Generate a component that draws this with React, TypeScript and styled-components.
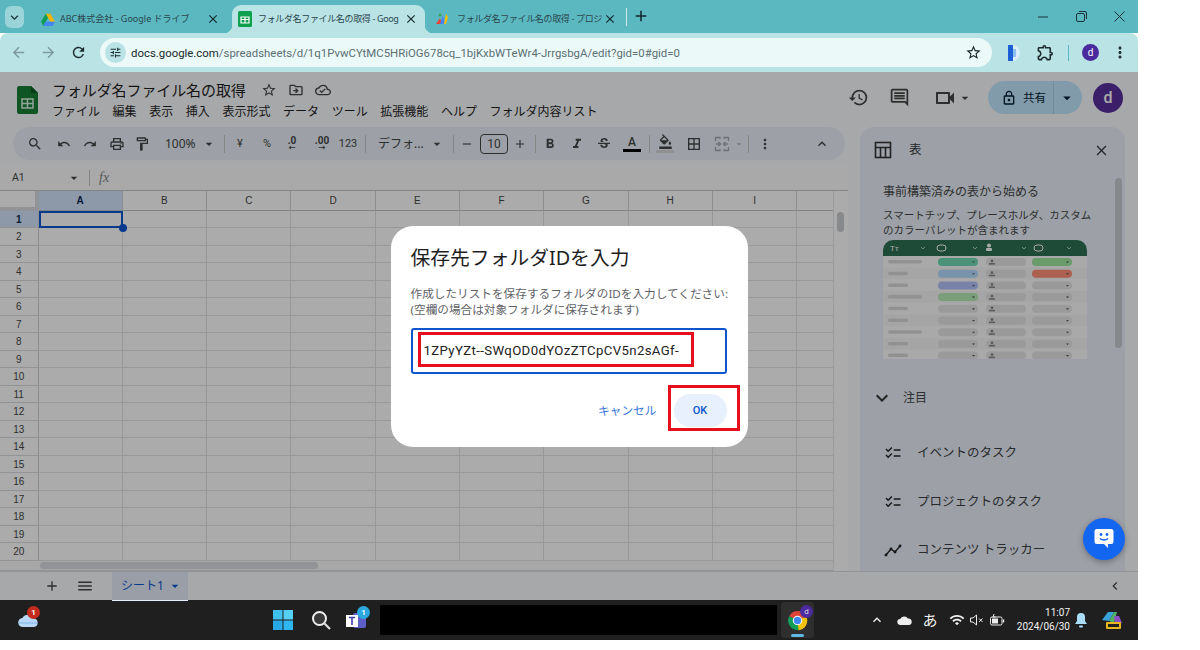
import React from "react";
import styled, { createGlobalStyle } from "styled-components";
import {
  MdSearch, MdUndo, MdRedo, MdOutlinePrint, MdOutlineFormatPaint, MdArrowDropDown, MdRemove, MdAdd,
  MdFormatBold, MdFormatItalic, MdStrikethroughS, MdOutlineFormatColorFill, MdBorderAll, MdMoreVert,
  MdKeyboardArrowUp, MdStarBorder, MdOutlineDriveFileMove, MdOutlineCloudDone, MdHistory,
  MdOutlineComment, MdOutlineVideocam, MdLockOutline, MdClose, MdMenu, MdChecklist,
  MdExpandMore, MdArrowBack, MdArrowForward, MdRefresh, MdTune, MdChevronLeft, MdKeyboardArrowDown,
  MdOutlineExtension, MdWifi,
} from "react-icons/md";

const SANS = `"Noto Sans", "Noto Sans CJK JP", sans-serif`;
const UI = `Roboto, "Noto Sans CJK JP", sans-serif`;

const Global = createGlobalStyle`
  html, body { margin: 0; padding: 0; background: #fff; }
  body { font-family: ${SANS}; width: 1200px; height: 650px; overflow: hidden; }
  * { box-sizing: border-box; }
`;

const Screen = styled.div`
  width: 1138px; height: 640px; display: flex; flex-direction: column; overflow: hidden;
`;

/* ---------- browser chrome ---------- */
const TabStrip = styled.div`
  height: 33px; flex: none; background: #5bb8c1; display: flex; align-items: flex-end; color: #1b3338;
`;
const TabListButton = styled.div`
  width: 19px; height: 22px; margin: 0 8px 5px 5px; border-radius: 6px; background: #9ad3d8;
  display: flex; align-items: center; justify-content: center; font-size: 15px;
`;
const Tab = styled.div<{ $w: number; $active?: boolean; $pl: number; $gap: number; $pr: number; $ml?: number }>`
  position: relative; width: ${(p) => p.$w}px; height: ${(p) => (p.$active ? 28 : 26)}px;
  margin-left: ${(p) => p.$ml ?? 0}px;
  padding: 0 ${(p) => p.$pr}px ${(p) => (p.$active ? 0 : 2)}px ${(p) => p.$pl}px;
  display: flex; align-items: center; gap: ${(p) => p.$gap}px;
  background: ${(p) => (p.$active ? "#b9e3e5" : "transparent")}; border-radius: 9px 9px 0 0;
  ${(p) => p.$active && `
    &::before, &::after { content: ""; position: absolute; bottom: 0; width: 8px; height: 8px; }
    &::before { left: -8px; background: radial-gradient(circle at 0 0, transparent 8px, #b9e3e5 8.5px); }
    &::after { right: -8px; background: radial-gradient(circle at 100% 0, transparent 8px, #b9e3e5 8.5px); }
  `}
`;
const TabTitle = styled.span<{ $tight?: boolean }>`
  flex: 1; min-width: 0; white-space: nowrap; font: 9px/14px ${SANS}; color: #2a464c;
  letter-spacing: ${(p) => (p.$tight ? "-0.35px" : "0")};
`;
const TabClose = styled(MdClose)`
  flex: none; font-size: 14px; color: #16282c;
`;
const TabDivider = styled.div`
  width: 1px; height: 18px; background: #cfeaec; margin: 0 0 7px 5px;
`;
const NewTab = styled(MdAdd)`
  font-size: 18px; margin: 0 0 8px 5px; color: #10262a;
`;
const WindowButtons = styled.div`
  margin-left: auto; display: flex; height: 33px; align-items: center; color: #1b3338;
`;
const WindowButton = styled.div`
  width: 38px; display: flex; justify-content: center; align-items: center;
`;
const ChromeBar = styled.div`
  height: 39px; flex: none; background: #b9e3e5; display: flex; align-items: center;
  border-radius: 8px 8px 0 0; padding-left: 3px; position: relative;
`;
const NavButton = styled.div<{ $muted?: boolean }>`
  width: 30px; display: flex; justify-content: center; font-size: 17px;
  color: ${(p) => (p.$muted ? "#7d9a9e" : "#1d2c2e")};
`;
const AddressBar = styled.div`
  width: 892px; height: 29px; margin-left: 7px; border-radius: 15px; background: #ecf9f9;
  display: flex; align-items: center; padding: 0 10px 0 5px;
`;
const SiteInfo = styled.div`
  width: 21px; height: 21px; border-radius: 50%; background: #b9e3e5; display: flex;
  align-items: center; justify-content: center; font-size: 13px; color: #1c2d30;
`;
const Url = styled.div`
  margin-left: 5px; font: 11.4px/16px ${UI}; color: #5b6f72; white-space: nowrap;
  b { font-weight: 400; color: #17282b; }
`;
const BarStar = styled(MdStarBorder)`
  margin-left: auto; font-size: 17px; color: #1d2c2e;
`;
const BarIcon = styled.div<{ $ml: number; $w: number }>`
  margin-left: ${(p) => p.$ml}px; width: ${(p) => p.$w}px; display: flex; justify-content: center;
  align-items: center; font-size: 19px; color: #1d2c2e;
`;
const BarDivider = styled.div`
  width: 1px; height: 16px; background: #5bb8c1; margin-left: 13px;
`;
const SmallAvatar = styled.div`
  margin-left: 13px; width: 17px; height: 17px; border-radius: 50%; background: #4b2a9f; color: #fff;
  font: 10px/17px ${UI}; text-align: center;
`;

/* ---------- sheets ---------- */
const SheetApp = styled.div`
  position: relative; height: 528px; flex: none; background: #f9fbfd; display: flex; flex-direction: column;
`;
const Dim = styled.div`
  position: absolute; inset: 0; background: rgba(0, 0, 0, 0.33); display: flex;
  align-items: center; justify-content: center; z-index: 10;
`;
const Header = styled.div`
  height: 55px; flex: none; display: flex; align-items: flex-start; padding: 0 15px 0 17px;
`;
const SheetsLogo = styled.svg`
  width: 21px; height: 28px; margin-top: 14px; flex: none;
`;
const TitleBlock = styled.div`
  margin-left: 14px; padding-top: 7px;
`;
const TitleRow = styled.div`
  display: flex; align-items: center; height: 22px;
`;
const DocTitle = styled.span`
  font: 15px/22px ${SANS}; color: #1f1f1f; letter-spacing: -0.1px;
`;
const TitleIcon = styled.span<{ $ml: number }>`
  display: flex; font-size: 16px; margin-left: ${(p) => p.$ml}px; color: #444746;
`;
const MenuRow = styled.div`
  display: flex; gap: 12.6px; height: 22px; align-items: center; font: 12px/22px ${SANS}; color: #1f1f1f;
`;
const HeaderRight = styled.div`
  margin-left: auto; margin-top: 9px; height: 33px; display: flex; align-items: center; color: #444746;
`;
const HeadIcon = styled.span<{ $ml: number; $size?: number }>`
  display: flex; margin-left: ${(p) => p.$ml}px; font-size: ${(p) => p.$size ?? 24}px;
`;
const ShareButton = styled.div`
  margin-left: 15px; width: 94px; height: 33px; border-radius: 17px; background: #c2e7ff;
  display: flex; align-items: center; color: #001d35;
`;
const ShareMain = styled.div`
  width: 66px; height: 33px; display: flex; align-items: center; padding-left: 13px; gap: 6px;
  border-right: 1px solid #a8cde8; font: 11.5px/16px ${SANS};
`;
const ShareCaret = styled(MdArrowDropDown)`
  font-size: 18px; margin-left: 4px;
`;
const Avatar = styled.div`
  margin-left: 11px; width: 30px; height: 30px; border-radius: 50%; background: #58309d; color: #fff;
  font: 500 16px/30px ${UI}; text-align: center;
`;
const Body = styled.div`
  flex: 1; min-height: 0; display: flex;
`;
const SheetColumn = styled.div`
  width: 848px; flex: none; display: flex; flex-direction: column; background: #fff;
`;
const ToolbarShell = styled.div`
  background: #f9fbfd; padding-bottom: 6px;
`;
const ToolBar = styled.div`
  height: 33px; background: #ebf0fa; border-radius: 17px; margin-left: 13px; width: 832px;
  display: flex; align-items: center; padding-left: 8px; color: #444746;
`;
const Tool = styled.div<{ $w: number; $ml?: number; $dim?: boolean; $size?: number }>`
  width: ${(p) => p.$w}px; margin-left: ${(p) => p.$ml ?? 0}px; flex: none; display: flex;
  justify-content: center; align-items: center; font-size: ${(p) => p.$size ?? 16}px; white-space: nowrap;
  color: ${(p) => (p.$dim ? "#a4a9ae" : "inherit")};
`;
const ToolText = styled(Tool)`
  font: 11px/16px ${UI};
`;
const ToolGroup = styled.div<{ $w: number; $pl: number }>`
  width: ${(p) => p.$w}px; flex: none; padding-left: ${(p) => p.$pl}px; display: flex; align-items: center;
  justify-content: space-between; font: 12px/16px ${SANS}; white-space: nowrap;
`;
const ToolSep = styled.div<{ $ml: number; $mr: number }>`
  width: 1px; height: 18px; flex: none; background: #c7c7c7;
  margin: 0 ${(p) => p.$mr}px 0 ${(p) => p.$ml}px;
`;
const DecimalMark = styled.span`
  display: flex; flex-direction: column; align-items: center; font: 700 10px/10px ${UI};
  i { font: 700 7px/5px ${UI}; }
`;
const SizeBox = styled.div`
  margin-left: 6px; width: 28px; height: 20px; border: 1px solid #444746; border-radius: 4px; flex: none;
  font: 12px/18px ${UI}; text-align: center;
`;
const ColorA = styled.div`
  display: flex; flex-direction: column; align-items: center; font: 500 12px/13px ${UI};
  &::after { content: ""; width: 18px; height: 3px; background: #000; }
`;
const FillIcon = styled.div`
  display: flex; flex-direction: column; align-items: center; font-size: 15px;
  &::after { content: ""; width: 18px; height: 3px; background: #d8d8d8; margin-top: 1px; }
`;
const FormulaBar = styled.div`
  height: 25px; flex: none; display: flex; align-items: center; padding-left: 12px;
  color: #444746; border-bottom: 1px solid #c4c7c5; background: #fdfdfd;
`;
const CellName = styled.span`
  font: 10.5px/14px ${UI}; width: 54px;
`;
const FormulaCaret = styled(MdArrowDropDown)`
  font-size: 16px;
`;
const FormulaDiv = styled.div`
  width: 1px; height: 16px; background: #c4c7c5; margin-left: 7px;
`;
const Fx = styled.i`
  font: italic 14px/16px "Liberation Serif", serif; margin-left: 9px; color: #80868b;
`;
const GridArea = styled.div`
  position: relative; flex: 1; min-height: 0; display: flex; flex-direction: column; overflow: hidden;
`;
const Grid = styled.div`
  display: grid; height: 369.5px; flex: none; overflow: hidden;
  grid-template-columns: 38.5px repeat(10, 84.3px);
  grid-template-rows: 19.5px repeat(20, 17.5px);
`;
const Corner = styled.div`
  background: #fff; border-right: 4px solid #dadce0; border-bottom: 4px solid #dadce0;
`;
const ColHead = styled.div<{ $on?: boolean }>`
  background: ${(p) => (p.$on ? "#d3e3fd" : "#fff")}; border-right: 1px solid #d0d3d6; border-bottom: 1px solid #c4c7c5;
  font: ${(p) => (p.$on ? 700 : 400)} 10px/19px "Liberation Sans", sans-serif; text-align: center;
  color: ${(p) => (p.$on ? "#0b2a52" : "#444746")};
`;
const RowHead = styled.div<{ $on?: boolean }>`
  background: ${(p) => (p.$on ? "#d3e3fd" : "#fff")}; border-right: 1px solid #d0d3d6; border-bottom: 1px solid #d9dcdf;
  font: ${(p) => (p.$on ? 700 : 400)} 10px/17px "Liberation Sans", sans-serif; text-align: center;
  color: ${(p) => (p.$on ? "#0b2a52" : "#444746")};
`;
const Cell = styled.div<{ $sel?: boolean }>`
  position: relative; border-right: 1px solid #e1e3e6; border-bottom: 1px solid #e1e3e6;
  ${(p) => p.$sel && `border: 2px solid #0b57d0; z-index: 1;`}
`;
const FillHandle = styled.span`
  position: absolute; right: -6px; bottom: -6px; width: 8px; height: 8px; border-radius: 50%; background: #0b57d0;
`;
const HTrack = styled.div`
  flex: 1; padding: 1px 0 0 40px; border-bottom: 1px solid #dadce0; background: #fafafa;
`;
const HThumb = styled.div`
  width: 278px; height: 7px; border-radius: 4px; background: #dadce0;
`;
const VThumb = styled.div`
  position: absolute; right: 4px; top: 21px; width: 7px; height: 20px; border-radius: 4px; background: #c9ccd0;
`;
const VGutter = styled.div`
  position: absolute; right: 0; top: 0; bottom: 0; width: 15px; background: #fff; border-left: 1px solid #e6e8ea;
`;

const SidePanel = styled.div`
  position: relative; width: 265px; margin-left: 12px; border-radius: 14px 14px 0 0; background: #ebf0fa;
  overflow: hidden; color: #444746;
`;
const SideHead = styled.div`
  height: 46px; display: flex; align-items: center; padding-left: 13px; color: #3c4043;
`;
const SideHeadIcon = styled.svg`
  width: 20px; height: 20px;
`;
const SideHeadTitle = styled.span`
  margin-left: 16px; font: 12.5px/16px ${SANS};
`;
const SideClose = styled(MdClose)`
  margin-left: auto; margin-right: 15px; font-size: 17px;
`;
const SideBody = styled.div`
  padding: 11px 0 0 23px;
`;
const SideHeading = styled.div`
  font: 12px/16px ${SANS}; color: #444746;
`;
const SideDesc = styled.div`
  margin-top: 8px; font: 10.5px/14.5px ${SANS}; color: #444746; white-space: nowrap;
`;
const Mock = styled.svg`
  display: block; margin-top: 3px; width: 204px; height: 119px;
`;
const SectionRow = styled.div`
  margin: 29px 0 0 -13px; height: 20px; display: flex; align-items: center; gap: 9px; font: 12px/16px ${SANS};
`;
const SectionChevron = styled(MdExpandMore)`
  font-size: 24px; color: #333;
`;
const TemplateList = styled.div`
  margin-top: 21px;
`;
const TemplateRow = styled.div`
  height: 48.5px; display: flex; align-items: center; gap: 15px; padding-left: 1px; font: 12.5px/16px ${SANS}; color: #3c4043;
  svg { font-size: 18px; color: #222; flex: none; }
`;
const PanelScroll = styled.div`
  position: absolute; right: 3px; top: 51px; width: 7px; height: 170px; border-radius: 4px; background: #c8cbd0;
`;
const Fab = styled.div`
  position: absolute; left: 1083px; top: 446px; width: 42px; height: 42px; border-radius: 50%; background: #1366f0;
  z-index: 20; display: flex; align-items: center; justify-content: center; box-shadow: 0 2px 6px rgba(0,0,0,.3);
`;
const BottomBar = styled.div`
  height: 29px; flex: none; display: flex; align-items: center; padding-left: 44px; color: #444746;
  background: #f9fbfd; border-top: 1px solid #dadce0;
`;
const BottomIcon = styled.span<{ $ml?: number }>`
  display: flex; margin-left: ${(p) => p.$ml ?? 0}px; font-size: 16px;
`;
const SheetTab = styled.div`
  margin-left: 18px; width: 76px; height: 29px; background: #e6edfa; color: #0b57d0; display: flex;
  align-items: center; padding-left: 9px; font: 12px/16px ${SANS};
`;
const SheetTabCaret = styled(MdArrowDropDown)`
  font-size: 16px; margin-left: 3px;
`;
const CollapseIcon = styled(MdChevronLeft)`
  margin: 0 15px 0 auto; font-size: 16px;
`;

/* ---------- dialog ---------- */
const Dialog = styled.div`
  width: 357px; height: 221px; border-radius: 22px; background: #fff; padding: 20px 21px 0 20px;
`;
const DialogTitle = styled.div`
  font: 19.8px/24px ${SANS}; color: #1f1f1f; white-space: nowrap;
`;
const DialogText = styled.div`
  margin-top: 16px; font: 11.65px/16px ${SANS}; color: #5f6368; white-space: nowrap;
`;
const DialogInput = styled.div`
  position: relative; margin-top: 10px; width: 316px; height: 46px; border: 2px solid #1155cc; border-radius: 3px;
  padding-left: 11px; font: 13.2px/42px Roboto, sans-serif; letter-spacing: 0.37px; color: #222; white-space: nowrap;
`;
const RedFrame = styled.div<{ $l: number; $t: number; $w: number; $h: number }>`
  position: absolute; left: ${(p) => p.$l}px; top: ${(p) => p.$t}px; width: ${(p) => p.$w}px; height: ${(p) => p.$h}px;
  border: 3px solid #e60f1e;
`;
const DialogActions = styled.div`
  margin-top: 20px; display: flex; justify-content: flex-end; align-items: center; gap: 17px;
`;
const CancelLink = styled.span`
  font: 11.7px/16px ${SANS}; color: #3b78d8;
`;
const OkButton = styled.div`
  position: relative; width: 53px; height: 33px; border-radius: 17px; background: #e8f0fe; color: #0b57d0;
  font: 500 11px/33px ${UI}; text-align: center;
`;

/* ---------- taskbar ---------- */
const Taskbar = styled.div`
  height: 40px; flex: none; background: #1f1f1f; display: flex; align-items: center; padding-left: 16px; color: #f2f2f2;
`;
const TaskSlot = styled.div<{ $ml?: number; $w: number }>`
  position: relative; width: ${(p) => p.$w}px; margin-left: ${(p) => p.$ml ?? 0}px; flex: none;
  display: flex; align-items: center; justify-content: center; font-size: 16px;
`;
const CountBadge = styled.span<{ $bg: string; $r: number; $t: number }>`
  position: absolute; right: ${(p) => p.$r}px; top: ${(p) => p.$t}px; width: 13px; height: 13px; border-radius: 50%;
  background: ${(p) => p.$bg}; color: #fff; font: 700 8px/13px ${UI}; text-align: center;
`;
const Blackout = styled.div`
  width: 397px; height: 30px; margin-left: 13px; background: #000; flex: none;
`;
const ChromeTile = styled.div`
  position: relative; width: 33px; height: 36px; margin-left: 4px; background: #2e2e2e; border-radius: 4px; flex: none;
  display: flex; align-items: center; justify-content: center;
  &::after { content: ""; position: absolute; bottom: 1px; left: 10px; width: 13px; height: 3px; border-radius: 2px; background: #5fb8e6; }
`;
const ProfileDot = styled.span`
  position: absolute; right: 1px; top: 3px; width: 13px; height: 13px; border-radius: 50%; background: #4b2a9f; color: #ddd;
  font: 8px/13px ${UI}; text-align: center;
`;
const Ime = styled(TaskSlot)`
  font: 15px/18px "Noto Sans CJK JP", sans-serif;
`;
const Clock = styled.div`
  margin-left: 5px; width: 60px; flex: none; text-align: right; font: 10px/14px ${UI}; color: #f2f2f2; white-space: nowrap;
`;

/* ---------- drawings ---------- */
const DriveIcon = () => (
  <svg width="14" height="13" viewBox="0 0 24 22" style={{ flex: "none" }}>
    <path d="M8 1h8l8 14h-8z" fill="#f4b400" />
    <path d="M8 1 0 15l4 7 8-14z" fill="#0f9d58" />
    <path d="M4 22h16l4-7H8z" fill="#4285f4" />
  </svg>
);
const SheetFavicon = () => (
  <svg width="14" height="16" viewBox="0 0 14 16" style={{ flex: "none" }}>
    <rect width="14" height="16" rx="1.5" fill="#0e9f4f" />
    <path d="M3 6h8v6H3zM3 8.5h8M7 6v6" stroke="#fff" strokeWidth="1.2" fill="none" />
  </svg>
);
const ProjectIcon = () => (
  <svg width="14" height="14" viewBox="0 0 14 14" style={{ flex: "none" }}>
    <path d="M1 12 5 6l2 6z" fill="#ea4335" />
    <path d="M5 12 8 3l2 9z" fill="#4285f4" />
    <path d="M9 12l2-10 2 3-2 7z" fill="#fbbc04" />
    <circle cx="5" cy="3" r="1.6" fill="#34a853" />
  </svg>
);
const MergeIcon = () => (
  <svg width="16" height="16" viewBox="0 0 16 16" fill="none" stroke="currentColor" strokeWidth="1.3">
    <path d="M6 3V1.5H1.5V5M10 3V1.5h4.5V5M6 13v1.5H1.5V11M10 13v1.5h4.5V11" />
    <path d="M2 8h4M4.5 6 6.5 8l-2 2M14 8h-4M11.5 6 9.5 8l2 2" />
  </svg>
);
const TrackerIcon = () => (
  <svg width="18" height="18" viewBox="0 0 18 18" fill="#222" stroke="#222" strokeWidth="1.3">
    <path d="M2 14l5-6 4 3 5-6" fill="none" />
    <circle cx="2" cy="14" r=".8" /><circle cx="7" cy="8" r=".8" />
    <circle cx="11" cy="11" r=".8" /><circle cx="16" cy="5" r=".8" />
  </svg>
);
const MockTable = () => {
  const col1 = ["#6fdcb4", "#b4dcff", "#b4c4fa", "#b6ecb6"];
  const col3 = ["#9fe89f", "#ff9078"];
  const rows = Array.from({ length: 9 }, (_, i) => i);
  return (
    <Mock viewBox="0 0 204 119">
      <path d="M0 119V10a10 10 0 0 1 10-10h184a10 10 0 0 1 10 10v109z" fill="#fff" />
      <path d="M0 16V10a10 10 0 0 1 10-10h184a10 10 0 0 1 10 10v6z" fill="#2c7053" />
      <text x="7" y="11" fontSize="8" fill="#fff" fontFamily="Liberation Sans">Tт</text>
      {[53, 150].map((x) => <rect key={x} x={x + 1} y="5" width="9" height="6" rx="3" fill="none" stroke="#fff" strokeWidth="1" />)}
      <circle cx="106" cy="5.5" r="2" fill="#fff" />
      <rect x="103" y="8" width="6" height="3" rx="1" fill="#fff" />
      {[38, 90, 139, 184].map((x) => <path key={x} d={`M${x} 7l2 2 2-2`} stroke="#d5e8de" fill="none" strokeWidth=".8" />)}
      {rows.map((i) => {
        const y = 16 + i * 11.7;
        return (
          <g key={i}>
            <rect y={y} width="204" height="11.7" fill={i % 2 ? "#f6f6f6" : "#fdfdfd"} />
            <rect x="5" y={y + 4} width={i % 3 === 0 ? 34 : 20} height="3.5" rx="1.7" fill="#d9d9d9" />
            <rect x="55" y={y + 2} width="40" height="8" rx="4" fill={col1[i] ?? "#e6e6e6"} />
            <rect x="103" y={y + 2} width="40" height="8" rx="4" fill="#e6e6e6" />
            <circle cx="109" cy={y + 5} r="1.4" fill="#888" />
            <rect x="106" y={y + 7} width="6" height="1.6" fill="#888" />
            <rect x="149" y={y + 2} width="40" height="8" rx="4" fill={col3[i] ?? "#e6e6e6"} />
            <path d={`M89 ${y + 5.5}h3l-1.5 1.6zM183 ${y + 5.5}h3l-1.5 1.6z`} fill="#555" />
          </g>
        );
      })}
    </Mock>
  );
};
const ChromeIcon = () => (
  <svg width="21" height="21" viewBox="0 0 24 24">
    <path d="M12 12 2.5 7A11 11 0 0 1 22 7z" fill="#db4437" />
    <path d="M12 12 22 7a11 11 0 0 1-9 16z" fill="#f4c20d" />
    <path d="M12 12l1 11A11 11 0 0 1 2.5 7z" fill="#0f9d58" />
    <circle cx="12" cy="12" r="5.4" fill="#fff" />
    <circle cx="12" cy="12" r="4.2" fill="#4285f4" />
  </svg>
);

const columns = ["A", "B", "C", "D", "E", "F", "G", "H", "I", ""];
const rowNumbers = Array.from({ length: 20 }, (_, i) => i + 1);
const menus = ["ファイル", "編集", "表示", "挿入", "表示形式", "データ", "ツール", "拡張機能", "ヘルプ", "フォルダ内容リスト"];
const templates: [React.ReactNode, string][] = [
  [<MdChecklist key="a" />, "イベントのタスク"],
  [<MdChecklist key="b" />, "プロジェクトのタスク"],
  [<TrackerIcon key="c" />, "コンテンツ トラッカー"],
];

export default function App() {
  return (
    <>
      <Global />
      <Screen>
        <TabStrip>
          <TabListButton><MdKeyboardArrowDown /></TabListButton>
          <Tab $w={193} $pl={9} $gap={5} $pr={5}>
            <DriveIcon />
            <TabTitle>ABC株式会社 - Google ドライブ</TabTitle>
            <TabClose />
          </Tab>
          <Tab $w={193} $active $pl={6} $gap={6} $pr={7} $ml={7}>
            <SheetFavicon />
            <TabTitle $tight>フォルダ名ファイル名の取得 - Goog</TabTitle>
            <TabClose />
          </Tab>
          <Tab $w={196} $pl={10} $gap={8} $pr={4}>
            <ProjectIcon />
            <TabTitle $tight>フォルダ名ファイル名の取得 - プロジ</TabTitle>
            <TabClose />
          </Tab>
          <TabDivider />
          <NewTab />
          <WindowButtons>
            <WindowButton><svg width="10" height="10"><path d="M0 5h10" stroke="#1b3338" /></svg></WindowButton>
            <WindowButton><svg width="11" height="11" fill="none" stroke="#1b3338"><rect x=".5" y="2.5" width="8" height="8" rx="1.5" /><path d="M3 .5h6a1.5 1.5 0 0 1 1.5 1.5v6" /></svg></WindowButton>
            <WindowButton><svg width="11" height="11" stroke="#1b3338"><path d="M.5.5l10 10M10.5.5l-10 10" /></svg></WindowButton>
          </WindowButtons>
        </TabStrip>
        <ChromeBar>
          <NavButton $muted><MdArrowBack /></NavButton>
          <NavButton $muted><MdArrowForward /></NavButton>
          <NavButton><MdRefresh /></NavButton>
          <AddressBar>
            <SiteInfo><MdTune /></SiteInfo>
            <Url><b>docs.google.com</b>/spreadsheets/d/1q1PvwCYtMC5HRiOG678cq_1bjKxbWTeWr4-JrrgsbgA/edit?gid=0#gid=0</Url>
            <BarStar />
          </AddressBar>
          <BarIcon $ml={12} $w={18}>
            <svg width="14" height="18" viewBox="0 0 14 18"><path d="M2 1h4a8 8 0 0 1 0 16H2z" fill="#dceefb" /><path d="M2 1h5v16H2z" fill="#1d5fd6" /><path d="M7 5h3v8H7z" fill="#8fc0f0" /></svg>
          </BarIcon>
          <BarIcon $ml={13} $w={20}><MdOutlineExtension /></BarIcon>
          <BarDivider />
          <SmallAvatar>d</SmallAvatar>
          <BarIcon $ml={12} $w={18}><MdMoreVert /></BarIcon>
        </ChromeBar>

        <SheetApp>
          <Header>
            <SheetsLogo viewBox="0 0 21 28">
              <path d="M2 0h12l7 7v19a2 2 0 0 1-2 2H2a2 2 0 0 1-2-2V2a2 2 0 0 1 2-2z" fill="#188038" />
              <path d="M14 0l7 7h-7z" fill="#0d5c27" />
              <path d="M5 13h11v9H5zM5 17.5h11M10.5 13v9" fill="none" stroke="#dff2e5" strokeWidth="1.5" />
            </SheetsLogo>
            <TitleBlock>
              <TitleRow>
                <DocTitle>フォルダ名ファイル名の取得</DocTitle>
                <TitleIcon $ml={15}><MdStarBorder /></TitleIcon>
                <TitleIcon $ml={11}><MdOutlineDriveFileMove /></TitleIcon>
                <TitleIcon $ml={11}><MdOutlineCloudDone /></TitleIcon>
              </TitleRow>
              <MenuRow>{menus.map((m) => <span key={m}>{m}</span>)}</MenuRow>
            </TitleBlock>
            <HeaderRight>
              <HeadIcon $ml={0} $size={21}><MdHistory /></HeadIcon>
              <HeadIcon $ml={20} $size={21}><MdOutlineComment /></HeadIcon>
              <HeadIcon $ml={23.5}><MdOutlineVideocam /></HeadIcon>
              <HeadIcon $ml={0} $size={16}><MdArrowDropDown /></HeadIcon>
              <ShareButton>
                <ShareMain><MdLockOutline size={16} />共有</ShareMain>
                <ShareCaret />
              </ShareButton>
              <Avatar>d</Avatar>
            </HeaderRight>
          </Header>
          <Body>
            <SheetColumn>
              <ToolbarShell>
                <ToolBar>
                  <Tool $w={28}><MdSearch /></Tool>
                  <Tool $w={30} $size={14}><MdUndo /></Tool>
                  <Tool $w={22} $size={14}><MdRedo /></Tool>
                  <Tool $w={32}><MdOutlinePrint /></Tool>
                  <Tool $w={18}><MdOutlineFormatPaint /></Tool>
                  <ToolGroup $w={66} $pl={14}>100%<MdArrowDropDown size={16} /></ToolGroup>
                  <ToolSep $ml={7} $mr={7} />
                  <ToolText $w={16}>¥</ToolText>
                  <ToolText $w={26} $ml={6}>%</ToolText>
                  <Tool $w={24}><DecimalMark>.0<i>←</i></DecimalMark></Tool>
                  <Tool $w={36}><DecimalMark>.00<i>→</i></DecimalMark></Tool>
                  <ToolText $w={16}>123</ToolText>
                  <ToolSep $ml={9} $mr={9} />
                  <ToolGroup $w={70} $pl={3}>デフォ...<MdArrowDropDown size={16} /></ToolGroup>
                  <ToolSep $ml={8} $mr={6} />
                  <Tool $w={14}><MdRemove /></Tool>
                  <SizeBox>10</SizeBox>
                  <Tool $w={14} $ml={5}><MdAdd /></Tool>
                  <ToolSep $ml={8} $mr={4} />
                  <Tool $w={20}><MdFormatBold /></Tool>
                  <Tool $w={34}><MdFormatItalic /></Tool>
                  <Tool $w={20}><MdStrikethroughS /></Tool>
                  <Tool $w={28} $ml={4}><ColorA>A</ColorA></Tool>
                  <ToolSep $ml={3} $mr={0} />
                  <Tool $w={30}><FillIcon><MdOutlineFormatColorFill /></FillIcon></Tool>
                  <Tool $w={28}><MdBorderAll /></Tool>
                  <Tool $w={24} $ml={2} $dim><MergeIcon /></Tool>
                  <Tool $w={10} $dim><MdArrowDropDown /></Tool>
                  <ToolSep $ml={4} $mr={0} />
                  <Tool $w={32}><MdMoreVert /></Tool>
                  <Tool $w={26} $ml={28}><MdKeyboardArrowUp /></Tool>
                </ToolBar>
              </ToolbarShell>
              <FormulaBar>
                <CellName>A1</CellName>
                <FormulaCaret />
                <FormulaDiv />
                <Fx>fx</Fx>
              </FormulaBar>
              <GridArea>
                <Grid>
                  <Corner />
                  {columns.map((c, i) => <ColHead key={i} $on={c === "A"}>{c}</ColHead>)}
                  {rowNumbers.map((n) => (
                    <React.Fragment key={n}>
                      <RowHead $on={n === 1}>{n}</RowHead>
                      {columns.map((c, i) => (
                        <Cell key={i} $sel={n === 1 && c === "A"}>
                          {n === 1 && c === "A" && <FillHandle />}
                        </Cell>
                      ))}
                    </React.Fragment>
                  ))}
                </Grid>
                <HTrack><HThumb /></HTrack>
                <VGutter />
                <VThumb />
              </GridArea>
            </SheetColumn>
            <SidePanel>
              <SideHead>
                <SideHeadIcon viewBox="0 0 20 20" fill="none" stroke="#333" strokeWidth="1.6">
                  <rect x="2.5" y="2.5" width="15" height="15" />
                  <path d="M2.5 7.5h15M7.5 7.5v10M12.5 7.5v10" />
                </SideHeadIcon>
                <SideHeadTitle>表</SideHeadTitle>
                <SideClose />
              </SideHead>
              <SideBody>
                <SideHeading>事前構築済みの表から始める</SideHeading>
                <SideDesc>スマートチップ、プレースホルダ、カスタム<br />のカラーパレットが含まれます</SideDesc>
                <MockTable />
                <SectionRow><SectionChevron />注目</SectionRow>
                <TemplateList>
                  {templates.map(([icon, label]) => (
                    <TemplateRow key={label}>{icon}{label}</TemplateRow>
                  ))}
                </TemplateList>
              </SideBody>
              <PanelScroll />
            </SidePanel>
          </Body>
          <BottomBar>
            <BottomIcon><MdAdd /></BottomIcon>
            <BottomIcon $ml={16}><MdMenu size={18} /></BottomIcon>
            <SheetTab>シート1<SheetTabCaret /></SheetTab>
            <CollapseIcon />
          </BottomBar>
          <Dim>
            <Dialog>
              <DialogTitle>保存先フォルダIDを入力</DialogTitle>
              <DialogText>作成したリストを保存するフォルダのIDを入力してください:<br />(空欄の場合は対象フォルダに保存されます)</DialogText>
              <DialogInput>
                1ZPyYZt--SWqOD0dYOzZTCpCV5n2sAGf-
                <RedFrame $l={5} $t={2} $w={276} $h={35} />
              </DialogInput>
              <DialogActions>
                <CancelLink>キャンセル</CancelLink>
                <OkButton>OK<RedFrame $l={-6} $t={-9} $w={72} $h={46} /></OkButton>
              </DialogActions>
            </Dialog>
          </Dim>
          <Fab>
            <svg width="20" height="22" viewBox="0 0 20 22">
              <path d="M3 1h14a2.5 2.5 0 0 1 2.5 2.5v10A2.5 2.5 0 0 1 17 16h-3v4l-4-4H3a2.5 2.5 0 0 1-2.5-2.5v-10A2.5 2.5 0 0 1 3 1z" fill="#fff" />
              <circle cx="7" cy="6.5" r="1.4" fill="#1366f0" />
              <circle cx="13" cy="6.5" r="1.4" fill="#1366f0" />
              <path d="M6 10.5c2 2 6 2 8 0" stroke="#1366f0" strokeWidth="1.5" fill="none" />
            </svg>
          </Fab>
        </SheetApp>

        <Taskbar>
          <TaskSlot $w={24}>
            <svg width="22" height="16" viewBox="0 0 22 16"><path d="M6 15a4.5 4.5 0 0 1-.6-9A6.5 6.5 0 0 1 17 6.5 4.3 4.3 0 0 1 17 15z" fill="#b9d8f6" /><path d="M2 11h18" stroke="#7db4ea" /></svg>
            <CountBadge $bg="#c42b1c" $r={0} $t={-6}>1</CountBadge>
          </TaskSlot>
          <TaskSlot $ml={233} $w={20}>
            <svg width="20" height="20" viewBox="0 0 20 20">
              <rect width="9.5" height="9.5" fill="#3fc1ee" /><rect x="10.5" width="9.5" height="9.5" fill="#55d0f4" />
              <rect y="10.5" width="9.5" height="9.5" fill="#27a9e8" /><rect x="10.5" y="10.5" width="9.5" height="9.5" fill="#2fb6ee" />
            </svg>
          </TaskSlot>
          <TaskSlot $ml={18} $w={20}>
            <svg width="20" height="20" viewBox="0 0 20 20" fill="none"><circle cx="8.5" cy="8.5" r="6.5" stroke="#eee" strokeWidth="2" fill="#3a3a3a" /><path d="M13.5 13.5 19 19" stroke="#ddd" strokeWidth="2.2" /></svg>
          </TaskSlot>
          <TaskSlot $ml={14} $w={22}>
            <svg width="22" height="20" viewBox="0 0 22 20">
              <rect x="8" y="3" width="13" height="15" rx="2" fill="#5b5fc7" />
              <rect x="1" y="5" width="12" height="12" fill="#fff" />
              <path d="M4 7.5h6M7 7.5V15" stroke="#3b3fa8" strokeWidth="1.6" />
            </svg>
            <CountBadge $bg="#2aa8e0" $r={-3} $t={-4}>1</CountBadge>
          </TaskSlot>
          <Blackout />
          <ChromeTile><ChromeIcon /><ProfileDot>d</ProfileDot></ChromeTile>
          <TaskSlot $ml={55} $w={16}><MdKeyboardArrowUp /></TaskSlot>
          <TaskSlot $ml={10} $w={18}>
            <svg width="15" height="10" viewBox="0 0 15 10"><path d="M3.5 10a3 3 0 0 1-.4-6A4.5 4.5 0 0 1 11 3.5a3.2 3.2 0 0 1 .8 6.5z" fill="#eee" /></svg>
          </TaskSlot>
          <Ime $ml={9} $w={16}>あ</Ime>
          <TaskSlot $ml={11} $w={16}><MdWifi /></TaskSlot>
          <TaskSlot $ml={4} $w={16}>
            <svg width="14" height="12" viewBox="0 0 14 12" fill="none" stroke="#eee"><path d="M.5 4h2.5L6.5 1v10L3 8H.5z" /><path d="M9 4.5l3.5 3.5M12.5 4.5 9 8" /></svg>
          </TaskSlot>
          <TaskSlot $ml={4} $w={16}>
            <svg width="15" height="12" viewBox="0 0 15 12" fill="none" stroke="#eee"><rect x=".5" y="3" width="11.5" height="8" rx="1.5" /><rect x="2" y="4.5" width="6" height="5" fill="#eee" stroke="none" /><path d="M13.5 5.5v3" strokeWidth="1.5" /><path d="M4 0l-1 3h2.5" /></svg>
          </TaskSlot>
          <Clock>11:07<br />2024/06/30</Clock>
          <TaskSlot $ml={3} $w={16}>
            <svg width="12" height="15" viewBox="0 0 12 15"><path d="M6 0a4 4 0 0 1 4 4v4l2 3H0l2-3V4a4 4 0 0 1 4-4z" fill="#a9dcf5" /><rect x="4" y="12.5" width="4" height="2" rx="1" fill="#a9dcf5" /></svg>
          </TaskSlot>
          <TaskSlot $ml={12} $w={22}>
            <svg width="22" height="20" viewBox="0 0 22 20">
              <path d="M1 10 7 2h6l-5 9z" fill="#36a2d8" /><path d="M8 11 13 2h3l-3 11z" fill="#4fb06a" />
              <path d="M13 6h5l3 7h-7z" fill="#8a4fc4" /><rect x="5" y="12" width="15" height="7" rx="1" fill="#e8b81e" />
              <rect x="7" y="14" width="11" height="3" fill="#222" />
            </svg>
          </TaskSlot>
        </Taskbar>
      </Screen>
    </>
  );
}
